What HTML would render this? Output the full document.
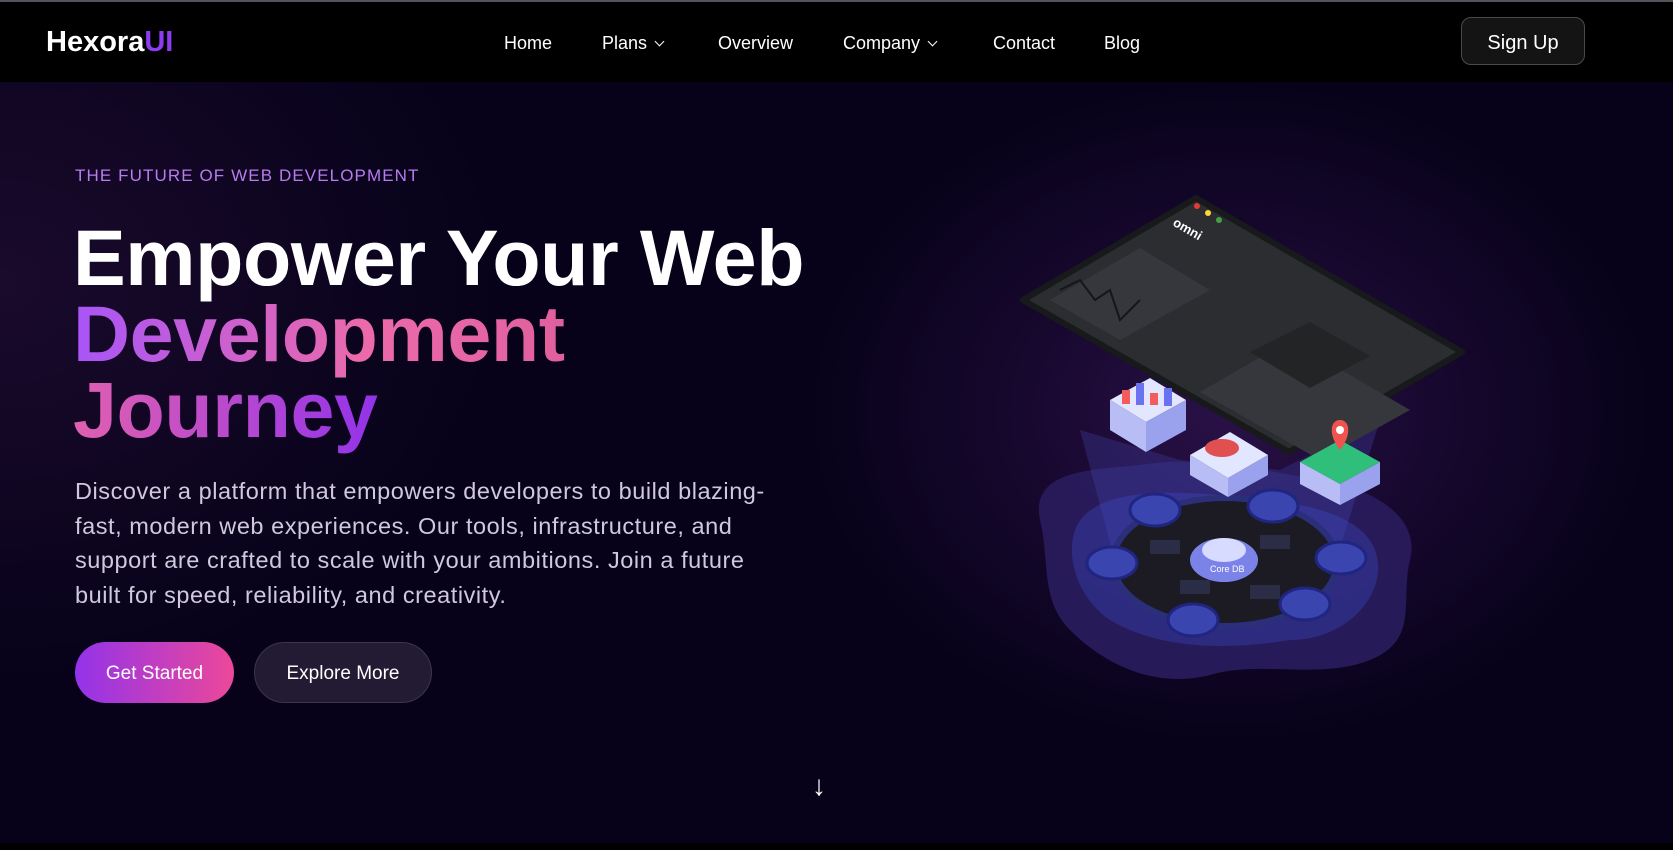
<!DOCTYPE html>
<html><head><meta charset="utf-8"><style>
*{margin:0;padding:0;box-sizing:border-box}
body{width:1673px;height:850px;overflow:hidden;background:#07021a;font-family:"Liberation Sans",sans-serif;position:relative}
.top{position:absolute;left:0;top:0;width:1673px;height:2px;background:#55525c}
nav{position:absolute;top:2px;left:0;width:1673px;height:80px;background:#000}
.logo{position:absolute;left:46px;top:24px;font-size:29px;font-weight:bold;color:#fff;letter-spacing:0px}
.logo span{color:#8b3cf0}
.links a{position:absolute;top:31px;color:#fff;font-size:18px;text-decoration:none}
.chev{display:inline-block;width:7px;height:7px;border-right:1.6px solid #fff;border-bottom:1.6px solid #fff;transform:rotate(45deg);margin-left:9px;position:relative;top:-4px}
.signup{position:absolute;left:1461px;top:15px;width:124px;height:48px;border-radius:10px;background:#141414;border:1px solid #4a4a4a;color:#fff;font-size:20px;text-align:center;line-height:50px}
.hero{position:absolute;top:82px;left:0;width:1673px;height:761px;background:
radial-gradient(ellipse 420px 330px at 1230px 330px,#2a1148 0%,rgba(34,12,60,.6) 50%,rgba(7,2,26,0) 100%),
radial-gradient(ellipse 500px 400px at 0px 200px,#1a0a2c 0%,rgba(7,2,26,0) 100%),#07021a}
.bot{position:absolute;left:0;top:843px;width:1673px;height:7px;background:#000}
.tag{position:absolute;left:75px;top:166px;color:#b77cf0;font-size:17px;letter-spacing:1.1px}
h1{position:absolute;left:73px;top:220px;font-size:79px;line-height:76px;font-weight:900;color:#fff;letter-spacing:-0.4px}
.g{background:linear-gradient(90deg,#a855f7,#ec6aaa 60%,#e0609e);-webkit-background-clip:text;color:transparent}
.g2{background:linear-gradient(90deg,#e060b0,#9333ea);-webkit-background-clip:text;color:transparent}
p{position:absolute;left:75px;top:474px;width:800px;font-size:23.5px;line-height:34.7px;color:#d0c8dc;white-space:nowrap;letter-spacing:0.55px}
.b1{position:absolute;left:75px;top:642px;width:159px;height:61px;border-radius:31px;background:linear-gradient(90deg,#9333ea,#ec4899);color:#fff;font-size:19px;text-align:center;line-height:63px}
.b2{position:absolute;left:254px;top:642px;width:178px;height:61px;border-radius:31px;background:#221b33;border:1px solid #3c3450;color:#fff;font-size:19px;text-align:center;line-height:61px}
.arrow{position:absolute;left:812px;top:770px;color:#fff;font-size:28px}
</style></head><body>
<div class="top"></div>
<nav>
<div class="logo">Hexora<span>UI</span></div>
<div class="links">
<a style="left:504px">Home</a>
<a style="left:602px">Plans<i class="chev"></i></a>
<a style="left:718px">Overview</a>
<a style="left:843px">Company<i class="chev"></i></a>
<a style="left:993px">Contact</a>
<a style="left:1104px">Blog</a>
</div>
<div class="signup">Sign Up</div>
</nav>
<div class="hero"></div>
<div class="bot"></div>
<div class="tag">THE FUTURE OF WEB DEVELOPMENT</div>
<h1>Empower Your Web<br><span class="g">Development</span><br><span class="g2">Journey</span></h1>
<p>Discover a platform that empowers developers to build blazing-<br>fast, modern web experiences. Our tools, infrastructure, and<br>support are crafted to scale with your ambitions. Join a future<br>built for speed, reliability, and creativity.</p>
<div class="b1">Get Started</div>
<div class="b2">Explore More</div>
<div class="arrow">↓</div>
<svg style="position:absolute;left:0;top:0" width="1673" height="850">
<path d="M1040 520 C1030 470 1090 470 1140 465 C1200 455 1260 470 1320 480 C1380 490 1420 520 1410 560 C1400 600 1420 640 1370 660 C1320 680 1260 660 1210 675 C1150 690 1100 660 1070 630 C1040 600 1050 560 1040 520Z" fill="#2a1d5e" opacity=".9"/>
<path d="M1075 530 C1090 490 1160 490 1220 495 C1290 500 1360 510 1375 550 C1390 590 1350 640 1290 640 C1230 650 1160 650 1110 620 C1080 600 1065 560 1075 530Z" fill="#2f2f8a" opacity=".8"/>
<polygon points="1080,430 1120,580 1330,580 1380,420 1280,470 1180,460" fill="#4a4ec8" opacity=".25"/>
<ellipse cx="1225" cy="562" rx="112" ry="64" fill="#1c1a22" stroke="#2b2f7a" stroke-width="6"/>
<g fill="#2a2d45"><rect x="1150" y="540" width="30" height="14"/><rect x="1260" y="535" width="30" height="14"/><rect x="1180" y="580" width="30" height="14"/><rect x="1250" y="585" width="30" height="14"/></g>
<ellipse cx="1224" cy="560" rx="34" ry="22" fill="#7b83e8"/><ellipse cx="1224" cy="550" rx="22" ry="12" fill="#d7dbff"/>
<text x="1210" y="572" font-size="9" fill="#fff" font-family="Liberation Sans">Core DB</text>
<g fill="#3a45b0" stroke="#202580" stroke-width="3">
<ellipse cx="1155" cy="510" rx="25" ry="16"/><ellipse cx="1273" cy="506" rx="25" ry="16"/><ellipse cx="1112" cy="563" rx="25" ry="16"/><ellipse cx="1341" cy="558" rx="25" ry="16"/><ellipse cx="1305" cy="604" rx="25" ry="16"/><ellipse cx="1193" cy="620" rx="25" ry="16"/></g>
<polygon points="1023,300 1196,198 1462,352 1289,452" fill="#2b2d31" stroke="#18191b" stroke-width="6" stroke-linejoin="round"/>
<polygon points="1050,300 1140,248 1210,290 1120,340" fill="#35373c"/>
<polygon points="1200,392 1290,340 1410,410 1320,460" fill="#35373c"/>
<polygon points="1250,352 1310,322 1370,356 1310,388" fill="#232426"/>
<polyline points="1060,290 1080,280 1095,300 1110,290 1120,320 1140,300" fill="none" stroke="#15161a" stroke-width="2"/>
<circle cx="1197" cy="206" r="3" fill="#e53935"/><circle cx="1208" cy="213" r="3" fill="#fdd835"/><circle cx="1219" cy="220" r="3" fill="#43a047"/>
<text x="1172" y="225" font-size="13" font-weight="bold" fill="#fff" transform="rotate(30 1172 225)" font-family="Liberation Sans">omni</text>
<g><polygon points="1110,400 1150,378 1186,400 1146,422" fill="#e3e6ff"/><polygon points="1110,400 1146,422 1146,452 1110,430" fill="#b8bef5"/><polygon points="1146,422 1186,400 1186,430 1146,452" fill="#9aa2ee"/>
<rect x="1122" y="390" width="8" height="14" fill="#f45b5b"/><rect x="1136" y="383" width="8" height="22" fill="#6a72f0"/><rect x="1150" y="393" width="8" height="12" fill="#f45b5b"/><rect x="1164" y="388" width="8" height="18" fill="#6a72f0"/></g>
<g><polygon points="1190,455 1230,432 1268,455 1228,478" fill="#e3e6ff"/><polygon points="1190,455 1228,478 1228,497 1190,475" fill="#b8bef5"/><polygon points="1228,478 1268,455 1268,475 1228,497" fill="#9aa2ee"/><ellipse cx="1222" cy="448" rx="17" ry="9" fill="#e05050"/></g>
<g><polygon points="1300,462 1340,440 1380,462 1340,484" fill="#2fbf7a"/><polygon points="1300,462 1340,484 1340,505 1300,484" fill="#b8bef5"/><polygon points="1340,484 1380,462 1380,484 1340,505" fill="#9aa2ee"/><path d="M1340 450 C1328 435 1330 420 1340 420 C1350 420 1352 435 1340 450Z" fill="#ef5350"/><circle cx="1340" cy="430" r="4" fill="#fff"/></g>
</svg>
</body></html>
